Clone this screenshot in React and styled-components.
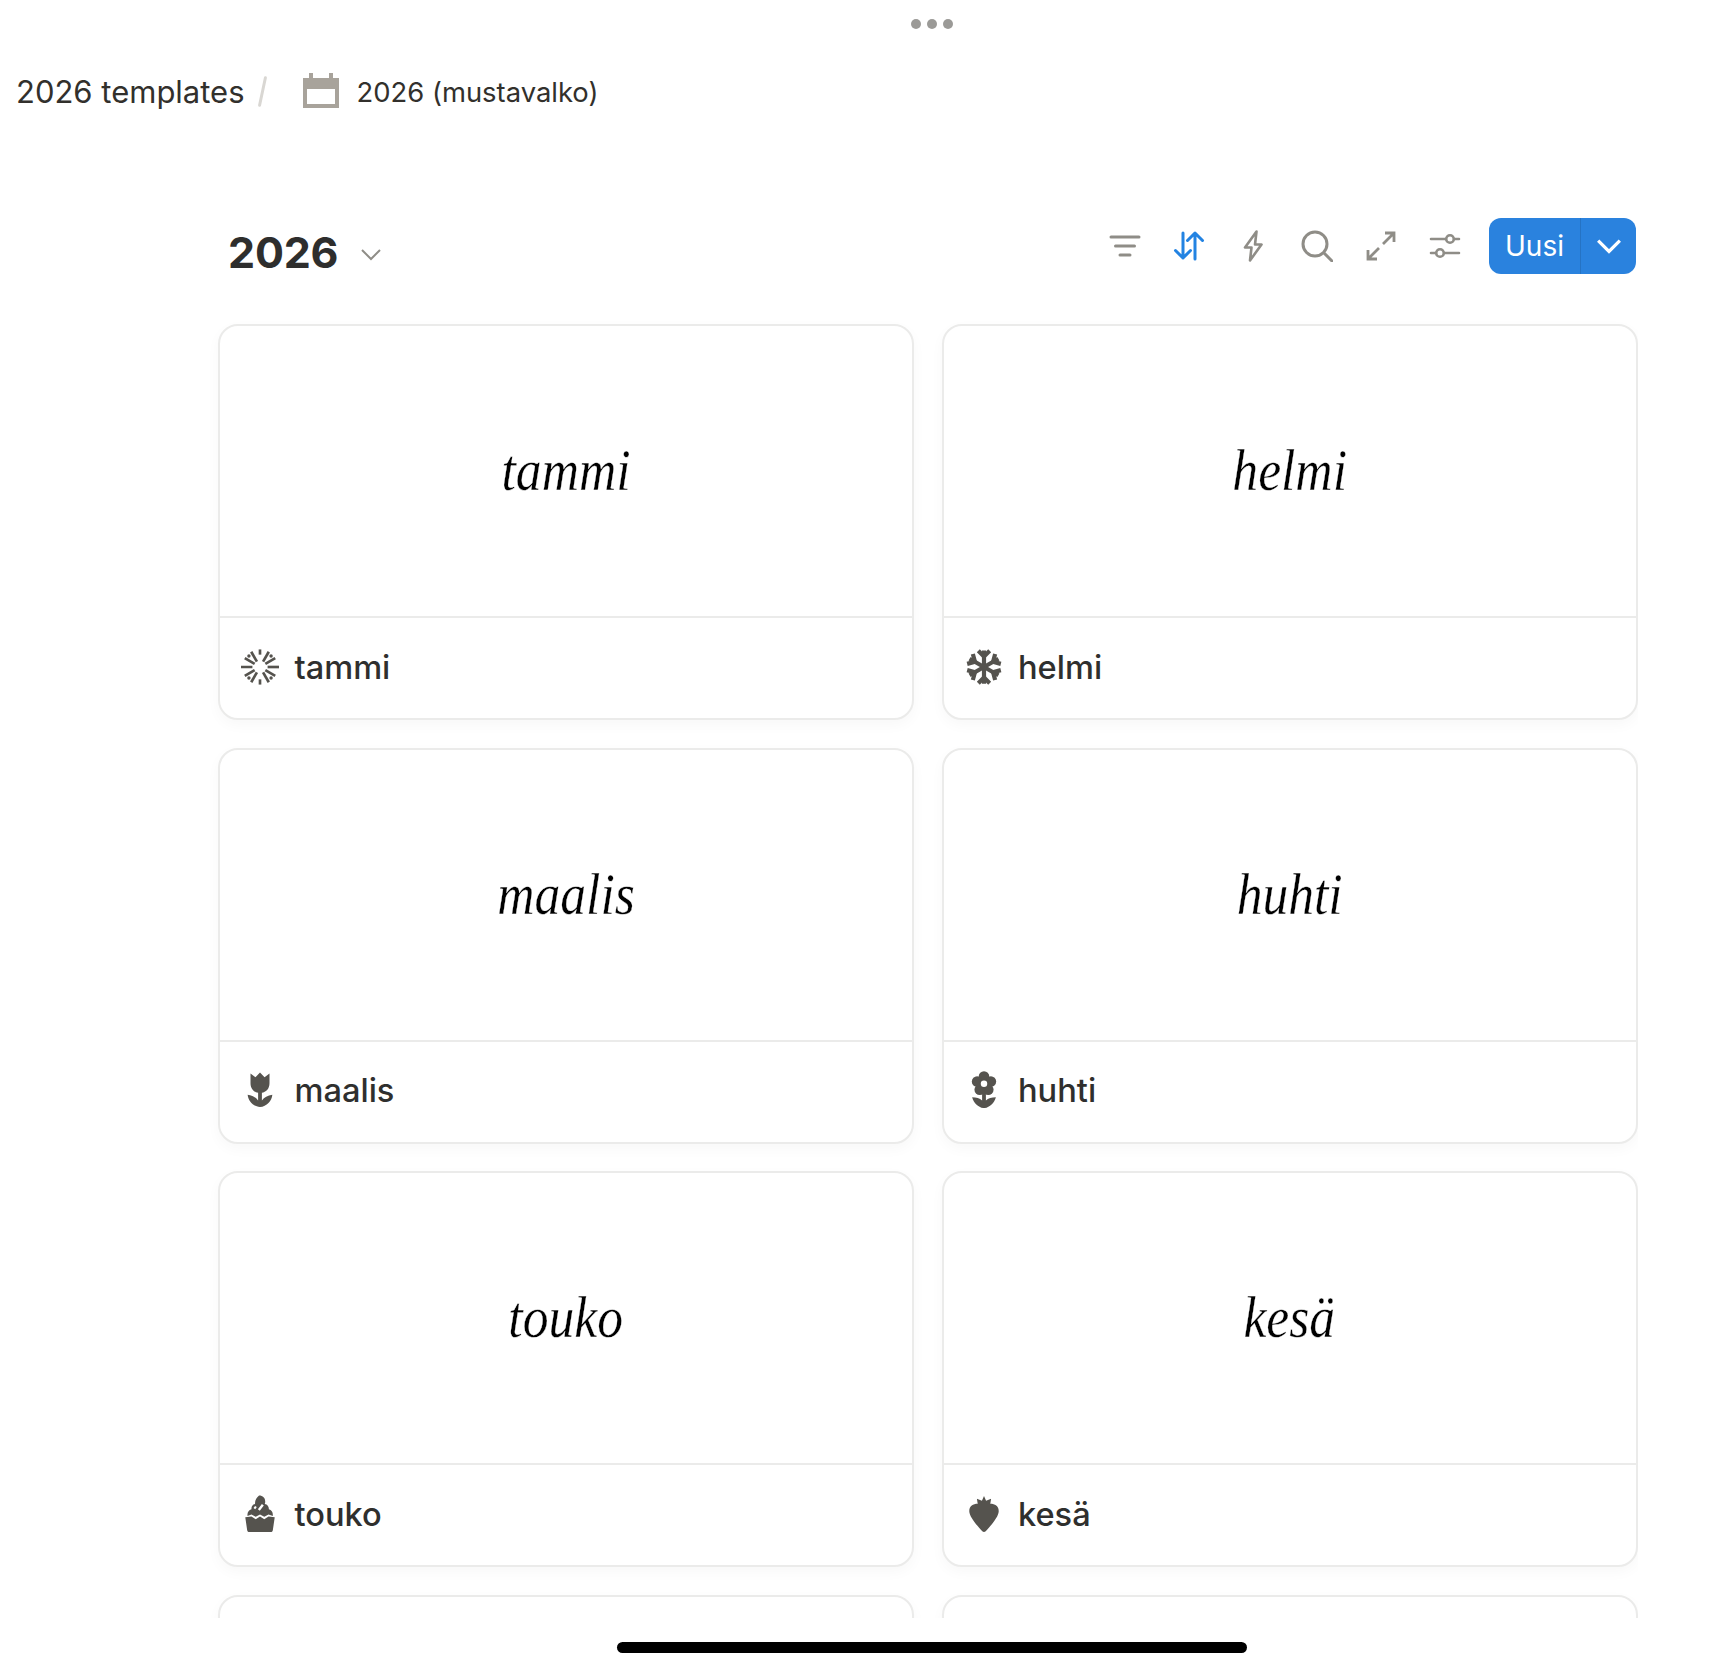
import React from "react";
import styled, { createGlobalStyle } from "styled-components";

const Global = createGlobalStyle`
  html, body { margin: 0; padding: 0; background: #fff; }
  body { font-family: Inter, "Liberation Sans", sans-serif; }
  * { box-sizing: border-box; }
`;

const Page = styled.div`
  width: 1732px;
  height: 1668px;
  position: relative;
  overflow: hidden;
  background: #fff;
  color: #2e2e2d;
`;
const TopBar = styled.div`
  height: 47px;
  padding-left: 132px;
  display: flex;
  align-items: center;
  justify-content: center;
  gap: 6px;
`;
const Dot = styled.span`
  width: 10px;
  height: 10px;
  border-radius: 50%;
  background: #9b9a97;
`;
const Breadcrumb = styled.nav`
  height: 91px;
  padding: 0 0 2px 16px;
  display: flex;
  align-items: center;
`;
const Crumb = styled.span`
  font-size: ${(p) => p.$size}px;
  line-height: 40px;
  white-space: nowrap;
  color: #32302c;
`;
const Slash = styled.span`
  width: 3px;
  height: 31px;
  margin: 0 39px 0 16px;
  background: #d9d7d3;
  border-radius: 2px;
  transform: rotate(12deg);
`;
const PageIcon = styled.svg`
  width: 36px;
  height: 36px;
  margin: 0 18px 2px 0;
  flex: none;
`;
const Section = styled.main`
  width: 1637.5px;
  height: 1480px;
  padding: 80px 0 0 218px;
  overflow: hidden;
`;
const TitleRow = styled.div`
  height: 70px;
  margin-bottom: 36px;
  display: flex;
  justify-content: space-between;
  align-items: flex-start;
`;
const TitleGroup = styled.div`
  display: flex;
  align-items: center;
  padding-left: 10px;
`;
const Title = styled.h1`
  margin: 0;
  font-size: 43px;
  line-height: 69px;
  font-weight: 700;
  letter-spacing: -0.2px;
  color: #2e2e2d;
`;
const TitleChevron = styled.svg`
  width: 24px;
  height: 24px;
  margin: 2px 0 0 21px;
`;
const Toolbar = styled.div`
  display: flex;
  align-items: center;
  padding-right: 1.5px;
`;
const ToolIcon = styled.svg`
  width: 32px;
  height: 32px;
  margin-right: 32px;
  flex: none;
  color: ${(p) => (p.$active ? "#2383e2" : "#8f8d87")};
  &:last-of-type {
    margin-right: 28px;
  }
`;
const NewButton = styled.div`
  display: flex;
  width: 147px;
  height: 56px;
  border-radius: 12px;
  overflow: hidden;
  background: #2a82de;
  color: #fff;
`;
const NewLabel = styled.span`
  width: 92px;
  font-size: 28px;
  font-weight: 400;
  line-height: 56px;
  text-align: center;
  border-right: 1px solid #2573c4;
`;
const NewCaret = styled.span`
  flex: 1;
  display: flex;
  align-items: center;
  justify-content: center;
`;
const Grid = styled.div`
  display: grid;
  grid-template-columns: 696px 696px;
  column-gap: 27.5px;
  row-gap: 27.5px;
`;
const Card = styled.article`
  height: 396px;
  border: 2px solid #ebebea;
  border-radius: 20px;
  background: #fff;
  box-shadow: 0 5px 14px rgba(15, 15, 15, 0.03);
  display: flex;
  flex-direction: column;
  overflow: hidden;
`;
const Cover = styled.div`
  height: 292px;
  border-bottom: 2px solid #ebebea;
  display: flex;
  align-items: flex-end;
  justify-content: center;
  padding-bottom: 116px;
`;
const CoverWord = styled.span`
  font-family: "Liberation Serif", serif;
  font-style: italic;
  font-size: 60px;
  line-height: 60px;
  color: #000;
  transform: scaleX(0.86);
  white-space: nowrap;
  -webkit-text-stroke: 0.35px #fff;
`;
const Footer = styled.div`
  flex: 1;
  display: flex;
  align-items: center;
  padding: 0 0 3px 21px;
  gap: 15.5px;
`;
const MonthIcon = styled.svg`
  width: 38px;
  height: 38px;
  flex: none;
  color: #55534e;
`;
const MonthName = styled.span`
  font-size: 32.6px;
  font-weight: 500;
  color: #2f2f2e;
`;
const HomeBar = styled.div`
  position: absolute;
  left: 617px;
  top: 1642px;
  width: 630px;
  height: 11px;
  border-radius: 6px;
  background: #000;
`;

const Stroke = { fill: "none", stroke: "currentColor", strokeLinecap: "round", strokeLinejoin: "round" };

const spokes = [];
for (let i = 0; i < 12; i++) {
  const a = (i * 30 * Math.PI) / 180;
  const long = i % 6 === 0 ? 20 : 18.5;
  const inner = i % 3 === 0 ? (i % 6 === 0 ? 8 : 13) : 6.5;
  spokes.push(
    <line
      key={i}
      x1={20 + inner * Math.cos(a)}
      y1={20 + inner * Math.sin(a)}
      x2={20 + long * Math.cos(a)}
      y2={20 + long * Math.sin(a)}
    />
  );
}
const dots = [45, 135, 225, 315].map((d) => {
  const a = (d * Math.PI) / 180;
  return <circle key={d} cx={20 + 16.5 * Math.cos(a)} cy={20 + 16.5 * Math.sin(a)} r="1.8" fill="currentColor" stroke="none" />;
});

const Burst = () => (
  <MonthIcon viewBox="0 0 40 40">
    <g {...Stroke} strokeWidth="2.8" strokeLinecap="butt">{spokes}</g>
    {dots}
  </MonthIcon>
);
const flakeArm = (
  <g>
    <line x1="20" y1="20" x2="20" y2="2.5" />
    <polyline points="14,3 20,9 26,3" />
  </g>
);
const Snow = () => (
  <MonthIcon viewBox="0 0 40 40">
    <g fill="none" stroke="currentColor" strokeWidth="4.4">
      {[0, 60, 120, 180, 240, 300].map((r) => (
        <g key={r} transform={`rotate(${r} 20 20)`}>{flakeArm}</g>
      ))}
    </g>
  </MonthIcon>
);
const Tulip = () => (
  <MonthIcon viewBox="0 0 40 40">
    <path fill="currentColor" d="M10 2.5 L15.2 6.5 L20 1.5 L24.8 6.5 L30 2.5 V13 C30 19 26 22.5 22 23 V31 C24.5 27.5 28 25.8 33 25 C32.5 31.5 27 37.5 20 38 C13 37.5 7.5 31.5 7 25 C12 25.8 15.5 27.5 18 31 V23 C14 22.5 10 19 10 13 Z" />
  </MonthIcon>
);
const petals = [0, 72, 144, 216, 288].map((d) => {
  const a = ((d - 90) * Math.PI) / 180;
  return <circle key={d} cx={20 + 7.6 * Math.cos(a)} cy={13.5 + 7.6 * Math.sin(a)} r="5.6" fill="currentColor" />;
});
const Flower = () => (
  <MonthIcon viewBox="0 0 40 40">
    {petals}
    <circle cx="20" cy="13.5" r="5" fill="currentColor" />
    <circle cx="20" cy="13.5" r="3.4" fill="#fff" />
    <path
      fill="currentColor"
      d="M18 23 H22 V31 C24.5 28.5 28 27.5 32.5 27.5 C31 33.5 26 38 20.8 39 H19.2 C14 38 9 33.5 7.5 27.5 C12 27.5 15.5 28.5 18 31 Z"
    />
  </MonthIcon>
);
const Cupcake = () => (
  <MonthIcon viewBox="0 0 40 40">
    <path
      fill="currentColor"
      fillRule="evenodd"
      d="M19 0.5 C23 0.5 25.5 3 25.5 7 C25.5 8 25.3 8.5 25 9.5 C28 10 29.5 12.5 29.3 15 C32 15.5 33.5 18 33.5 20.5 V22 L29 20.5 L24.5 23 L20 20.5 L15.5 23 L11 20.5 L6.8 22 V20.5 C6.8 18 8.5 15.5 11 15 C10.8 12.5 12 10 14.8 9.5 C14.5 6 16 3 19 0.5 Z M22 9.5 L17.8 15 L19.8 16.5 L24 11 Z M14.8 11.5 L13.2 13.8 L15 15 L16.6 12.7 Z"
    />
    <path
      fill="currentColor"
      d="M4.5 23.5 L11 22.5 L15.5 25.5 L20 22.5 L24.5 25.5 L29 22.5 L35.5 23.5 L33.5 37 C33.2 38.3 32.5 39 31 39 H9 C7.5 39 6.8 38.3 6.5 37 Z"
    />
  </MonthIcon>
);
const Berry = () => (
  <MonthIcon viewBox="0 0 40 40">
    <path
      fill="currentColor"
      d="M20 1 L22.2 6 L27.5 4 L26.6 9.2 C31.5 9.2 35.5 11.5 35.5 17 C35.5 23 26.5 33 21.8 38.2 C20.8 39.3 19.2 39.3 18.2 38.2 C13.5 33 4.5 23 4.5 17 C4.5 11.5 8.5 9.2 13.4 9.2 L12.5 4 L17.8 6 Z"
    />
  </MonthIcon>
);

const months = [
  { id: 1, name: "tammi", Icon: Burst },
  { id: 2, name: "helmi", Icon: Snow },
  { id: 3, name: "maalis", Icon: Tulip },
  { id: 4, name: "huhti", Icon: Flower },
  { id: 5, name: "touko", Icon: Cupcake },
  { id: 6, name: "kesä", Icon: Berry },
  { id: 7 },
  { id: 8 },
];

export default function App() {
  return (
    <Page>
      <Global />
      <TopBar>
        <Dot />
        <Dot />
        <Dot />
      </TopBar>
      <Breadcrumb>
        <Crumb $size={31}>2026 templates</Crumb>
        <Slash />
        <PageIcon viewBox="0 0 36 36">
          <path
            fill="#a8a39b"
            fillRule="evenodd"
            d="M0 5 H6 V0 H10 V5 H26 V0 H30 V5 H36 V35 H0 Z M4 16 V31 H32 V16 Z"
          />
        </PageIcon>
        <Crumb $size={27.4}>2026 (mustavalko)</Crumb>
      </Breadcrumb>
      <Section>
        <TitleRow>
          <TitleGroup>
            <Title>2026</Title>
            <TitleChevron viewBox="0 0 24 24">
              <polyline points="3,8 12,17 21,8" fill="none" stroke="#8f8d87" strokeWidth="2" />
            </TitleChevron>
          </TitleGroup>
          <Toolbar>
            <ToolIcon viewBox="0 0 32 32">
              <g {...Stroke} strokeWidth="3">
                <line x1="2" y1="7" x2="30" y2="7" />
                <line x1="6.5" y1="16" x2="25.5" y2="16" />
                <line x1="11" y1="25" x2="21" y2="25" />
              </g>
            </ToolIcon>
            <ToolIcon $active viewBox="0 0 32 32">
              <g {...Stroke} strokeWidth="3">
                <path d="M10 3 V28 M2.5 20.5 L10 28 L17.5 20.5" />
                <path d="M22 29 V3 M14.5 10.5 L22 3 L29.5 10.5" />
              </g>
            </ToolIcon>
            <ToolIcon viewBox="0 0 32 32">
              <path {...Stroke} strokeWidth="2.6" d="M19.5 1.5 L8 17.5 H14.5 L13 30.5 L24.5 14.5 H18 Z" />
            </ToolIcon>
            <ToolIcon viewBox="0 0 32 32">
              <g {...Stroke} strokeWidth="3">
                <circle cx="14" cy="14" r="12" />
                <line x1="23" y1="23" x2="31" y2="31" />
              </g>
            </ToolIcon>
            <ToolIcon viewBox="0 0 32 32">
              <g {...Stroke} strokeWidth="2.8" strokeLinecap="butt" strokeLinejoin="miter">
                <path d="M20 3 H29 V12 M29 3 L18 14" />
                <path d="M3 20 V29 H12 M3 29 L14 18" />
              </g>
            </ToolIcon>
            <ToolIcon viewBox="0 0 32 32">
              <g {...Stroke} strokeWidth="2.6">
                <path d="M2 9 H17 M25 9 H30" />
                <circle cx="21" cy="9" r="3.8" />
                <path d="M2 23 H7 M15 23 H30" />
                <circle cx="11" cy="23" r="3.8" />
              </g>
            </ToolIcon>
            <NewButton>
              <NewLabel>Uusi</NewLabel>
              <NewCaret>
                <svg width="26" height="26" viewBox="0 0 24 24">
                  <polyline points="2,7 12,17 22,7" fill="none" stroke="#fff" strokeWidth="3" />
                </svg>
              </NewCaret>
            </NewButton>
          </Toolbar>
        </TitleRow>
        <Grid>
          {months.map(({ id, name, Icon }) => (
            <Card key={id}>
              <Cover>{name && <CoverWord>{name}</CoverWord>}</Cover>
              {name && (
                <Footer>
                  <Icon />
                  <MonthName>{name}</MonthName>
                </Footer>
              )}
            </Card>
          ))}
        </Grid>
      </Section>
      <HomeBar />
    </Page>
  );
}
